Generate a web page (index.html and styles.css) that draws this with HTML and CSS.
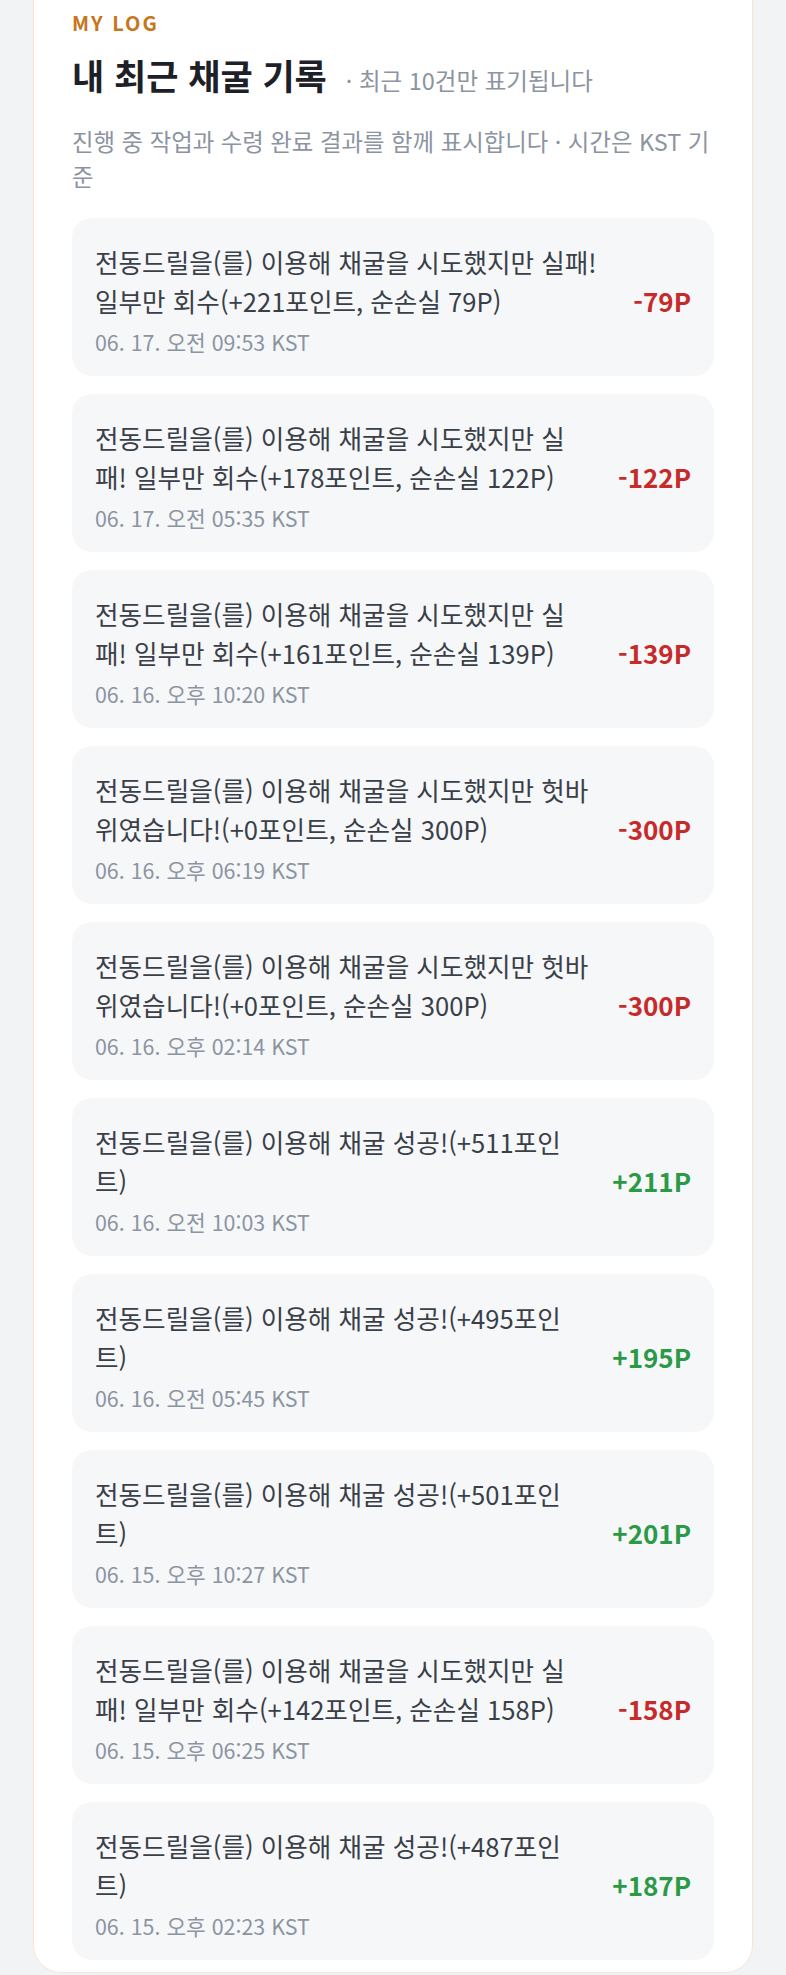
FILE: index.html
```html
<!DOCTYPE html>
<html lang="ko">
<head>
  <meta charset="UTF-8">
  <title>My Log</title>
  <link rel="stylesheet" href="styles.css">
</head>
<body>

  <section class="log-card">
    <p class="eyebrow">MY LOG</p>
    <div class="title-row">
      <h2>내 최근 채굴 기록</h2>
      <span class="title-note">· 최근 10건만 표기됩니다</span>
    </div>
    <p class="desc">진행 중 작업과 수령 완료 결과를 함께 표시합니다 · 시간은 KST 기준</p>

    <ul class="log-list">
      <li class="log-item">
        <div class="log-text">
          <p class="log-msg">전동드릴을(를) 이용해 채굴을 시도했지만 실패! 일부만 회수(+221포인트, 순손실 79P)</p>
          <p class="log-time">06. 17. 오전 09:53 KST</p>
        </div>
        <span class="log-amount minus">-79P</span>
      </li>
      <li class="log-item">
        <div class="log-text">
          <p class="log-msg">전동드릴을(를) 이용해 채굴을 시도했지만 실패! 일부만 회수(+178포인트, 순손실 122P)</p>
          <p class="log-time">06. 17. 오전 05:35 KST</p>
        </div>
        <span class="log-amount minus">-122P</span>
      </li>
      <li class="log-item">
        <div class="log-text">
          <p class="log-msg">전동드릴을(를) 이용해 채굴을 시도했지만 실패! 일부만 회수(+161포인트, 순손실 139P)</p>
          <p class="log-time">06. 16. 오후 10:20 KST</p>
        </div>
        <span class="log-amount minus">-139P</span>
      </li>
      <li class="log-item">
        <div class="log-text">
          <p class="log-msg">전동드릴을(를) 이용해 채굴을 시도했지만 헛바위였습니다!(+0포인트, 순손실 300P)</p>
          <p class="log-time">06. 16. 오후 06:19 KST</p>
        </div>
        <span class="log-amount minus">-300P</span>
      </li>
      <li class="log-item">
        <div class="log-text">
          <p class="log-msg">전동드릴을(를) 이용해 채굴을 시도했지만 헛바위였습니다!(+0포인트, 순손실 300P)</p>
          <p class="log-time">06. 16. 오후 02:14 KST</p>
        </div>
        <span class="log-amount minus">-300P</span>
      </li>
      <li class="log-item">
        <div class="log-text">
          <p class="log-msg">전동드릴을(를) 이용해 채굴 성공!(+511포인트)</p>
          <p class="log-time">06. 16. 오전 10:03 KST</p>
        </div>
        <span class="log-amount plus">+211P</span>
      </li>
      <li class="log-item">
        <div class="log-text">
          <p class="log-msg">전동드릴을(를) 이용해 채굴 성공!(+495포인트)</p>
          <p class="log-time">06. 16. 오전 05:45 KST</p>
        </div>
        <span class="log-amount plus">+195P</span>
      </li>
      <li class="log-item">
        <div class="log-text">
          <p class="log-msg">전동드릴을(를) 이용해 채굴 성공!(+501포인트)</p>
          <p class="log-time">06. 15. 오후 10:27 KST</p>
        </div>
        <span class="log-amount plus">+201P</span>
      </li>
      <li class="log-item">
        <div class="log-text">
          <p class="log-msg">전동드릴을(를) 이용해 채굴을 시도했지만 실패! 일부만 회수(+142포인트, 순손실 158P)</p>
          <p class="log-time">06. 15. 오후 06:25 KST</p>
        </div>
        <span class="log-amount minus">-158P</span>
      </li>
      <li class="log-item">
        <div class="log-text">
          <p class="log-msg">전동드릴을(를) 이용해 채굴 성공!(+487포인트)</p>
          <p class="log-time">06. 15. 오후 02:23 KST</p>
        </div>
        <span class="log-amount plus">+187P</span>
      </li>
    </ul>
  </section>

</body>
</html>
```

FILE: styles.css
```css
body {
  margin: 0;
  background-color: #f2f3f5;
  font-family: "Noto Sans CJK KR", "Noto Sans", sans-serif;
}

.log-card {
  width: 720px;
  box-sizing: border-box;
  margin: -30px auto 0;
  padding: 40px 38px 12px;
  background-color: #fff;
  border: 1px solid #f9e5d5;
  border-radius: 28px;
}

.eyebrow {
  margin: 0;
  font-size: 20px;
  line-height: 24px;
  font-weight: 700;
  letter-spacing: 2px;
  color: #c8761c;
}

.title-row {
  display: flex;
  align-items: baseline;
  gap: 19px;
  margin-top: 18px;
}

.title-row h2 {
  margin: 0;
  font-size: 35px;
  line-height: 44px;
  font-weight: 700;
  color: #1d2127;
}

.title-note {
  font-size: 23.5px;
  color: #8c94a1;
}

.desc {
  margin: 27px 0 0;
  font-size: 23.4px;
  line-height: 35px;
  color: #8c94a1;
}

.log-list {
  list-style: none;
  margin: 24px 0 0;
  padding: 0;
  display: flex;
  flex-direction: column;
  gap: 18px;
}

.log-item {
  display: flex;
  align-items: center;
  gap: 28px;
  padding: 24px 23px 18px 23px;
  background-color: #f6f7f9;
  border-radius: 20px;
}

.log-text {
  flex: 1;
  min-width: 0;
}

.log-msg {
  margin: 0;
  font-size: 25.6px;
  line-height: 39px;
  color: #3a3f48;
}

.log-time {
  margin: 6px 0 0;
  font-size: 21.4px;
  line-height: 32px;
  color: #8c94a1;
}

.log-amount {
  font-size: 26px;
  font-weight: 700;
  white-space: nowrap;
}

.minus {
  color: #c62a2a;
}

.plus {
  color: #2b9a47;
}
```
